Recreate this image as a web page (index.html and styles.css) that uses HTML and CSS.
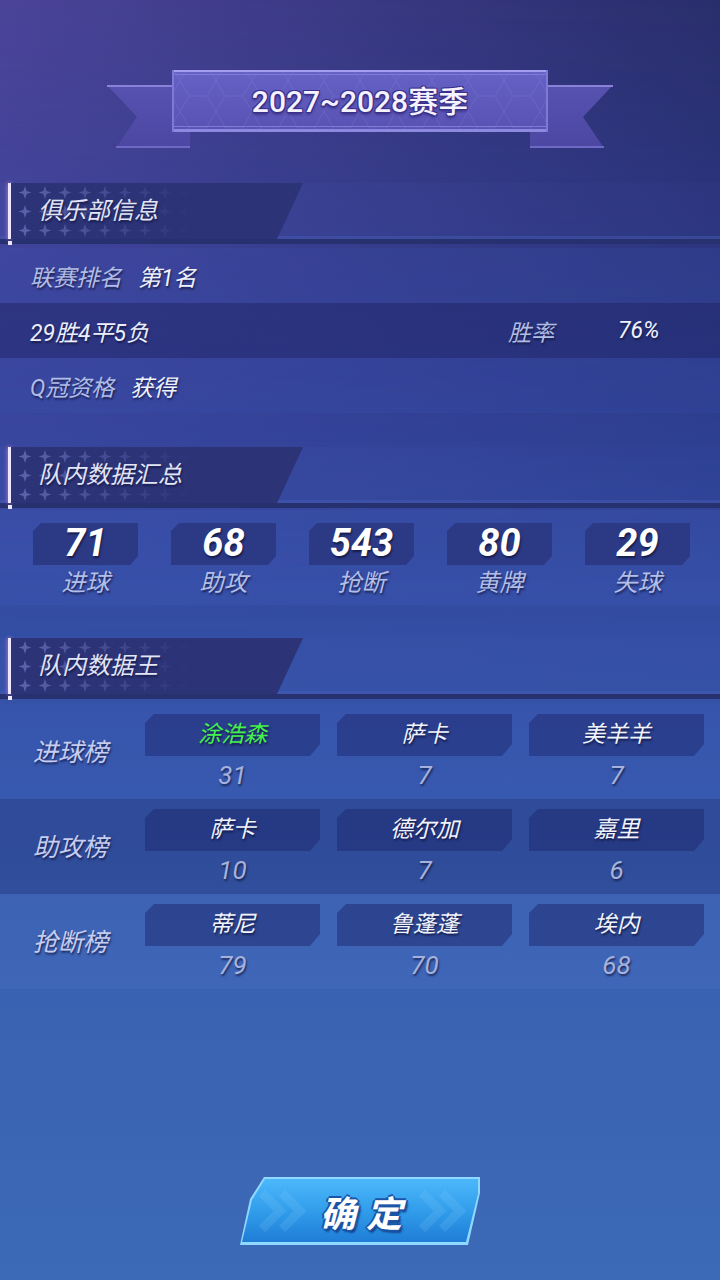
FILE: index.html
```html
<!DOCTYPE html>
<html lang="zh-CN">
<head>
  <meta charset="UTF-8">
  <title>赛季总结</title>
  <meta name="viewport" content="width=device-width, initial-scale=1.0">
  <link rel="stylesheet" href="styles.css">
</head>
<body>
  <div class="page">
    <div class="content">

      <!-- 顶部彩带 -->
      <div class="banner">
        <svg class="banner-art" viewBox="0 0 720 90" width="720" height="90">
          <defs>
            <linearGradient id="plq" x1="0" y1="0" x2="0" y2="1">
              <stop offset="0" stop-color="#6662c6"/>
              <stop offset="1" stop-color="#5752b2"/>
            </linearGradient>
            <linearGradient id="tail" x1="0" y1="0" x2="0" y2="1">
              <stop offset="0" stop-color="#5752b0"/>
              <stop offset="1" stop-color="#4b47a2"/>
            </linearGradient>
            <pattern id="hex" width="36" height="31" patternUnits="userSpaceOnUse">
              <path d="M9 0 L27 0 L36 15.5 L27 31 L9 31 L0 15.5 Z" fill="none" stroke="#8f8ae0" stroke-width="1" opacity="0.22"/>
            </pattern>
          </defs>
          <polygon points="107,20 190,20 190,83 116,83 137,52" fill="url(#tail)"/>
          <line x1="107" y1="21" x2="190" y2="21" stroke="#8882d9" stroke-width="2"/>
          <line x1="116" y1="82" x2="190" y2="82" stroke="#6e69c4" stroke-width="2"/>
          <polygon points="613,20 530,20 530,83 604,83 583,52" fill="url(#tail)"/>
          <line x1="613" y1="21" x2="530" y2="21" stroke="#8882d9" stroke-width="2"/>
          <line x1="604" y1="82" x2="530" y2="82" stroke="#6e69c4" stroke-width="2"/>
          <rect x="172" y="5" width="376" height="62" fill="url(#plq)"/>
          <rect x="172" y="5" width="376" height="62" fill="url(#hex)"/>
          <rect x="172" y="5" width="376" height="2" fill="#a39ef0"/>
          <rect x="172" y="9" width="376" height="1" fill="#7f7ad6"/>
          <rect x="172" y="61" width="376" height="1" fill="#7f7ad6"/>
          <rect x="172" y="64" width="376" height="3" fill="#8d88e0"/>
          <rect x="172" y="5" width="2" height="62" fill="#7e79d4"/>
          <rect x="546" y="5" width="2" height="62" fill="#7e79d4"/>
        </svg>
        <div class="banner-title">2027~2028赛季</div>
      </div>

      <!-- 俱乐部信息 -->
      <div class="sec-head">
        <div class="sec-tab">
          <svg class="stars" width="180" height="56" viewBox="0 0 180 56">
            <defs>
              <pattern id="star" width="20" height="19" patternUnits="userSpaceOnUse" x="0" y="0">
                <path d="M10 3 L11.6 7.9 L16.5 9.5 L11.6 11.1 L10 16 L8.4 11.1 L3.5 9.5 L8.4 7.9 Z" fill="#8f96e0"/>
              </pattern>
              <linearGradient id="fade" x1="0" y1="0" x2="1" y2="0">
                <stop offset="0" stop-color="#fff" stop-opacity="0.5"/>
                <stop offset="1" stop-color="#fff" stop-opacity="0"/>
              </linearGradient>
              <mask id="fm"><rect width="180" height="56" fill="url(#fade)"/></mask>
            </defs>
            <rect width="180" height="56" fill="url(#star)" mask="url(#fm)"/>
          </svg>
          <span>俱乐部信息</span>
        </div>
      </div>

      <div class="info">
        <div class="info-row light">
          <span class="muted">联赛排名</span>
          <span class="value">第1名</span>
        </div>
        <div class="info-row dark">
          <span class="record">29胜4平5负</span>
          <span class="muted rate-label">胜率</span>
          <span class="rate">76%</span>
        </div>
        <div class="info-row light">
          <span class="muted">Q冠资格</span>
          <span class="value">获得</span>
        </div>
      </div>

      <!-- 队内数据汇总 -->
      <div class="sec-head sec-gap">
        <div class="sec-tab">
          <svg class="stars" width="180" height="56" viewBox="0 0 180 56">
            <rect width="180" height="56" fill="url(#star)" mask="url(#fm)"/>
          </svg>
          <span>队内数据汇总</span>
        </div>
      </div>

      <div class="stats">
        <div class="stat"><div class="stat-num">71</div><div class="stat-label">进球</div></div>
        <div class="stat"><div class="stat-num">68</div><div class="stat-label">助攻</div></div>
        <div class="stat"><div class="stat-num">543</div><div class="stat-label">抢断</div></div>
        <div class="stat"><div class="stat-num">80</div><div class="stat-label">黄牌</div></div>
        <div class="stat"><div class="stat-num">29</div><div class="stat-label">失球</div></div>
      </div>

      <!-- 队内数据王 -->
      <div class="sec-head sec-gap2">
        <div class="sec-tab">
          <svg class="stars" width="180" height="56" viewBox="0 0 180 56">
            <rect width="180" height="56" fill="url(#star)" mask="url(#fm)"/>
          </svg>
          <span>队内数据王</span>
        </div>
      </div>

      <div class="leaders">
        <div class="leader-row">
          <div class="leader-label">进球榜</div>
          <div class="cell"><div class="name green">涂浩森</div><div class="num">31</div></div>
          <div class="cell"><div class="name">萨卡</div><div class="num">7</div></div>
          <div class="cell"><div class="name">美羊羊</div><div class="num">7</div></div>
        </div>
        <div class="leader-row dark">
          <div class="leader-label">助攻榜</div>
          <div class="cell"><div class="name">萨卡</div><div class="num">10</div></div>
          <div class="cell"><div class="name">德尔加</div><div class="num">7</div></div>
          <div class="cell"><div class="name">嘉里</div><div class="num">6</div></div>
        </div>
        <div class="leader-row light">
          <div class="leader-label">抢断榜</div>
          <div class="cell"><div class="name">蒂尼</div><div class="num">79</div></div>
          <div class="cell"><div class="name">鲁蓬蓬</div><div class="num">70</div></div>
          <div class="cell"><div class="name">埃内</div><div class="num">68</div></div>
        </div>
      </div>

      <div class="btn-wrap">
        <button class="btn" type="button">
          <svg class="chev" width="236" height="64" viewBox="0 0 236 64">
            <path d="M20 14 L38 32 L20 50 M40 14 L58 32 L40 50" fill="none" stroke="#9bdcff" stroke-width="9" opacity="0.14"/>
            <path d="M180 14 L198 32 L180 50 M200 14 L218 32 L200 50" fill="none" stroke="#9bdcff" stroke-width="9" opacity="0.14"/>
          </svg>
          <span>确定</span>
        </button>
      </div>

    </div>
  </div>
</body>
</html>
```

FILE: styles.css
```css
body {
  margin: 0;
  padding: 0;
  background: #3c6ab6;
  font-family: Roboto, "Noto Sans CJK SC", sans-serif;
}
.page {
  position: relative;
  width: 720px;
  min-height: 1280px;
  overflow: hidden;
  background: linear-gradient(180deg, #3a3f8c 0%, #32429a 28%, #3450a6 52%, #3a62b2 78%, #3c6ab6 100%);
}
.page::before {
  content: "";
  position: absolute;
  left: 0;
  top: 0;
  width: 720px;
  height: 640px;
  background: linear-gradient(90deg, rgba(95,75,170,0.45) 0%, rgba(20,25,70,0.45) 100%);
  -webkit-mask-image: linear-gradient(180deg, #000 0%, transparent 100%);
  mask-image: linear-gradient(180deg, #000 0%, transparent 100%);
}
.content {
  position: relative;
  z-index: 1;
}

/* banner */
.banner {
  position: relative;
  height: 90px;
  margin-top: 66px;
}
.banner-art {
  position: absolute;
  left: 0;
  top: -1px;
}
.banner-title {
  position: relative;
  height: 72px;
  line-height: 72px;
  text-align: center;
  font-size: 30px;
  font-weight: 500;
  color: #f4f2ff;
  text-shadow: 1px 1px 0 #3b318c, -1px -1px 0 #3b318c, 1px -1px 0 #3b318c, -1px 1px 0 #3b318c, 0 2px 3px #2a2270;
}

/* section header */
.sec-head {
  position: relative;
  height: 56px;
  margin-top: 27px;
  background: linear-gradient(90deg, rgba(70,90,180,0.18), rgba(60,80,170,0.05));
  border-bottom: 5px solid #27316f;
  box-shadow: inset 0 -3px 0 rgba(70,90,180,0.45);
}
.sec-gap {
  margin-top: 34px;
}
.sec-gap2 {
  margin-top: 33px;
}
.sec-head::before {
  content: "";
  position: absolute;
  left: 8px;
  top: 0;
  width: 3px;
  height: 56px;
  background: #f1e6ff;
  box-shadow: 0 0 4px #c98cf0;
}
.sec-head::after {
  content: "";
  position: absolute;
  left: 8px;
  top: 58px;
  width: 4px;
  height: 4px;
  background: #f1e6ff;
}
.sec-tab {
  position: relative;
  width: 292px;
  height: 56px;
  margin-left: 11px;
  background: #2c3377;
  clip-path: polygon(0 0, 100% 0, calc(100% - 26px) 100%, 0 100%);
}
.stars {
  position: absolute;
  left: 4px;
  top: 0;
}
.sec-tab span {
  position: relative;
  display: block;
  padding-left: 27px;
  line-height: 56px;
  font-size: 24px;
  font-style: italic;
  color: #e2e5f6;
  text-shadow: 1px 2px 2px rgba(15,20,60,0.7);
}

/* club info */
.info {
  margin-top: 4px;
}
.info-row {
  display: flex;
  align-items: center;
  height: 55px;
  padding: 0 30px;
  font-size: 23px;
  font-style: italic;
  text-shadow: 1px 2px 2px rgba(15,20,60,0.7);
}
.info-row.light {
  background: rgba(60,85,175,0.2);
}
.info-row.dark {
  background: linear-gradient(90deg, rgba(25,30,90,0.4), rgba(25,30,90,0.3));
}
.muted {
  color: #b1bce4;
}
.value {
  margin-left: 16px;
  color: #f0f2fc;
}
.record {
  flex: 1;
  color: #eceffb;
}
.rate-label {
  width: 110px;
}
.rate {
  width: 72px;
  color: #f0f2fc;
}

/* team stats */
.stats {
  display: flex;
  gap: 33px;
  height: 95px;
  margin-top: 2px;
  padding: 13px 0 0 33px;
  box-sizing: border-box;
  background: rgba(70,100,200,0.18);
}
.stat {
  width: 105px;
  text-align: center;
}
.stat-num {
  height: 42px;
  line-height: 40px;
  background: #2c3a86;
  clip-path: polygon(8px 0, 100% 0, 100% calc(100% - 9px), calc(100% - 8px) 100%, 0 100%, 0 8px);
  font-size: 38px;
  font-weight: 700;
  font-style: italic;
  color: #ffffff;
  text-shadow: 1px 2px 2px rgba(15,20,60,0.8);
}
.stat-label {
  margin-top: 4px;
  line-height: 28px;
  font-size: 24px;
  font-style: italic;
  color: #b3bee6;
  text-shadow: 1px 2px 2px rgba(15,20,60,0.7);
}

/* leaders */
.leaders {
  margin-top: 5px;
}
.leader-row {
  display: grid;
  grid-template-columns: 95px repeat(3, 175px);
  column-gap: 17px;
  height: 95px;
  padding: 10px 0 0 33px;
  box-sizing: border-box;
  background: rgba(70,100,200,0.15);
}
.leader-row.dark {
  background: rgba(25,35,100,0.25);
}
.leader-row.light {
  background: rgba(90,130,210,0.18);
}
.leader-label {
  padding-top: 18px;
  font-size: 25px;
  font-style: italic;
  color: #c6cdef;
  text-shadow: 1px 2px 2px rgba(15,20,60,0.7);
}
.cell {
  text-align: center;
}
.name {
  height: 42px;
  line-height: 42px;
  background: rgba(30,40,110,0.5);
  clip-path: polygon(9px 0, 100% 0, 100% calc(100% - 12px), calc(100% - 10px) 100%, 0 100%, 0 9px);
  font-size: 23px;
  font-style: italic;
  color: #f2f4fd;
  text-shadow: 1px 2px 2px rgba(15,20,60,0.8);
}
.name.green {
  color: #44f04a;
}
.num {
  line-height: 38px;
  font-size: 26px;
  font-style: italic;
  color: #a6b2dc;
  text-shadow: 1px 2px 2px rgba(15,20,60,0.7);
}

/* button */
.btn-wrap {
  display: flex;
  justify-content: center;
  margin-top: 188px;
}
.btn {
  position: relative;
  width: 240px;
  height: 68px;
  padding: 0;
  border: none;
  background: #8fd8ff;
  clip-path: polygon(24px 0, 100% 0, 100% 16px, calc(100% - 12px) 100%, 0 100%, 10px 22px);
  cursor: pointer;
}
.btn::before {
  content: "";
  position: absolute;
  left: 2px;
  top: 2px;
  right: 2px;
  bottom: 3px;
  background: linear-gradient(180deg, #4cb8fb 0%, #2f9ae9 55%, #1f7dd6 100%);
  clip-path: polygon(23px 0, 100% 0, 100% 15px, calc(100% - 12px) 100%, 0 100%, 10px 21px);
}
.chev {
  position: absolute;
  left: 2px;
  top: 2px;
}
.btn span {
  position: relative;
  display: block;
  padding-left: 12px;
  font-family: "Noto Sans CJK SC", sans-serif;
  font-size: 36px;
  font-weight: 700;
  font-style: italic;
  letter-spacing: 10px;
  color: #ffffff;
  text-shadow: 2px 0 0 #1b55a8, -2px 0 0 #1b55a8, 0 2px 0 #1b55a8, 0 -2px 0 #1b55a8, 2px 3px 2px #143f85;
}
```
